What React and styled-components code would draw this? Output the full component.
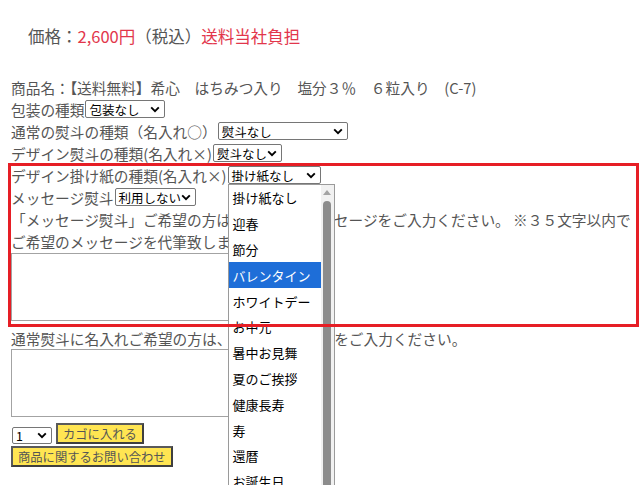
import React from "react";
import styled, { createGlobalStyle } from "styled-components";

const Global = createGlobalStyle`
  html, body { margin: 0; padding: 0; background: #fff; }
  body { font-family: "Noto Sans CJK JP", "Noto Sans", sans-serif; }
`;

const Page = styled.div`
  width: 640px;
  height: 485px;
  overflow: hidden;
  position: relative;
  padding-left: 11px;
  box-sizing: border-box;
  color: #555;
`;

const PriceLine = styled.div`
  margin: 24px 0 0 17px;
  height: 24px;
  line-height: 24px;
  font-size: 16.5px;
  white-space: nowrap;
`;

const Red = styled.span`
  color: #e2364b;
`;

const Tight = styled.span`
  letter-spacing: -0.5em;
`;

const Form = styled.div`
  margin-top: 28px;
  font-size: 14.7px;
`;

const Line = styled.div`
  height: 22px;
  display: flex;
  align-items: center;
  white-space: nowrap;
  margin-top: ${(p) => p.$mt || 0}px;
`;

const Section = styled.div`
  position: relative;
  &::after {
    content: "";
    position: absolute;
    top: -1px;
    left: -3px;
    right: 1px;
    bottom: -6px;
    border: 3px solid #e61e25;
    pointer-events: none;
    z-index: 5;
  }
`;

const SelectBox = styled.span`
  position: relative;
  display: inline-flex;
  align-items: center;
  justify-content: space-between;
  box-sizing: border-box;
  width: ${(p) => p.$w}px;
  height: ${(p) => p.$h || 18}px;
  margin-left: 1px;
  padding: 0 4px 0 3px;
  border: 1px solid #767676;
  border-radius: 2px;
  background: #fff;
  color: #000;
  font-size: 12.5px;
  white-space: nowrap;
  & > svg {
    flex: none;
  }
`;

const Chevron = () => (
  <svg width="10" height="7" viewBox="0 0 10 7">
    <path d="M1.2 1.4 L5 5.2 L8.8 1.4" fill="none" stroke="#000" strokeWidth="1.9" />
  </svg>
);

const Listbox = styled.div`
  position: absolute;
  top: 17px;
  left: -1px;
  width: 107px;
  height: 320px;
  box-sizing: border-box;
  border: 1px solid #9a9a9a;
  background: #fff;
  display: flex;
  z-index: 4;
  overflow: hidden;
`;

const Items = styled.div`
  flex: 1;
  display: flex;
  flex-direction: column;
`;

const Item = styled.div`
  height: 25.8px;
  flex: none;
  display: flex;
  align-items: center;
  padding-left: 4px;
  font-size: 13px;
  color: ${(p) => (p.$active ? "#fff" : "#000")};
  background: ${(p) => (p.$active ? "#1e6ed8" : "transparent")};
`;

const Track = styled.div`
  width: 13px;
  flex: none;
  background: #f1f1f1;
  display: flex;
  flex-direction: column;
  align-items: center;
`;

const UpArrow = styled.div`
  margin-top: 5px;
  width: 0;
  height: 0;
  border-left: 4.5px solid transparent;
  border-right: 4.5px solid transparent;
  border-bottom: 5px solid #a3a3a3;
`;

const Thumb = styled.div`
  margin-top: 6px;
  width: 8px;
  flex: 1;
  background: #8c8c8c;
  border-radius: 4px 4px 0 0;
`;

const TextArea = styled.div`
  box-sizing: border-box;
  width: 320px;
  height: 68px;
  border: 1px solid #a3a3a3;
  background: #fff;
  margin-top: ${(p) => p.$mt || 0}px;
`;

const ActionRow = styled.div`
  margin-top: 6px;
  display: flex;
  align-items: flex-end;
  gap: 4px;
`;

const Button = styled.div`
  display: inline-flex;
  align-items: center;
  box-sizing: border-box;
  height: 21px;
  padding: 0 5px;
  background: #ffe552;
  border: 2px solid #3f3f3f;
  border-top-color: #5a5a5a;
  border-left-color: #5a5a5a;
  color: #555;
  font-size: 12.3px;
  white-space: nowrap;
`;

const SecondRow = styled.div`
  margin-top: 2px;
  display: flex;
`;

const options = [
  "掛け紙なし",
  "迎春",
  "節分",
  "バレンタイン",
  "ホワイトデー",
  "お中元",
  "暑中お見舞",
  "夏のご挨拶",
  "健康長寿",
  "寿",
  "還暦",
  "お誕生日",
];

export default function App() {
  return (
    <>
      <Global />
      <Page>
        <PriceLine>
          価格：<Red>2,600円</Red>（税込）<Red>送料当社負担</Red>
        </PriceLine>
        <Form>
          <Line>
            商品名<Tight>：</Tight>【送料無料】希心　はちみつ入り　塩分３％　６粒入り　(C-7)
          </Line>
          <Line>
            包装の種類
            <SelectBox $w={80}>
              包装なし
              <Chevron />
            </SelectBox>
          </Line>
          <Line>
            通常の熨斗の種類（名入れ○）
            <SelectBox $w={130}>
              熨斗なし
              <Chevron />
            </SelectBox>
          </Line>
          <Line>
            デザイン熨斗の種類(名入れ×)
            <SelectBox $w={69}>
              熨斗なし
              <Chevron />
            </SelectBox>
          </Line>
          <Section>
            <Line>
              デザイン掛け紙の種類(名入れ×)
              <SelectBox $w={93}>
                掛け紙なし
                <Chevron />
                <Listbox>
                  <Items>
                    {options.map((o) => (
                      <Item key={o} $active={o === "バレンタイン"}>
                        {o}
                      </Item>
                    ))}
                  </Items>
                  <Track>
                    <UpArrow />
                    <Thumb />
                  </Track>
                </Listbox>
              </SelectBox>
            </Line>
            <Line>
              メッセージ熨斗
              <SelectBox $w={81}>
                利用しない
                <Chevron />
              </SelectBox>
            </Line>
            <Line>「メッセージ熨斗」ご希望の方は、ご希望のメッセージをご入力ください。 ※３５文字以内で</Line>
            <Line>ご希望のメッセージを代筆致します。</Line>
            <TextArea $mt={1} />
          </Section>
          <Line $mt={6}>通常熨斗に名入れご希望の方は、ご希望のお名前をご入力ください。</Line>
          <TextArea />
          <ActionRow>
            <SelectBox $w={40} $h={17}>
              1
              <Chevron />
            </SelectBox>
            <Button>カゴに入れる</Button>
          </ActionRow>
          <SecondRow>
            <Button>商品に関するお問い合わせ</Button>
          </SecondRow>
        </Form>
      </Page>
    </>
  );
}
